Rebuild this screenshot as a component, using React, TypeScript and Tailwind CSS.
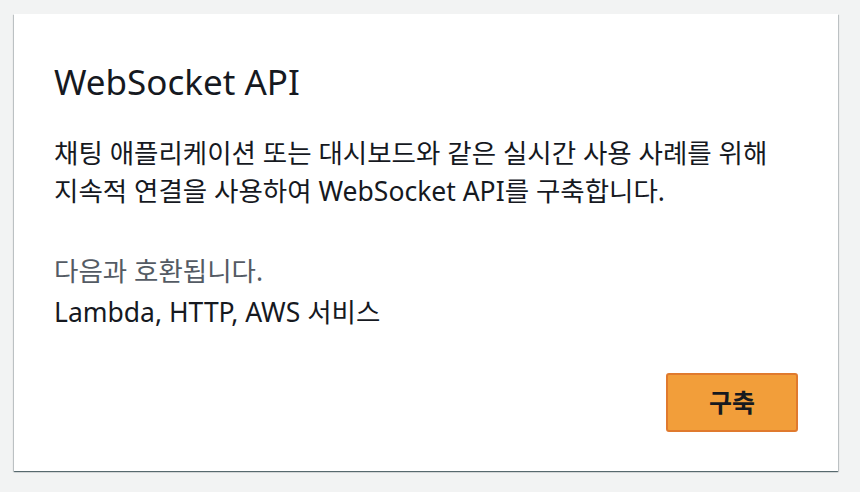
export default function App() {
  return (
    <div
      className="w-[860px] h-[492px] bg-[#f2f3f3] pt-[14px] pl-[14px]"
      style={{ fontFamily: '"Noto Sans", "Noto Sans CJK KR", sans-serif' }}
    >
      <div className="w-[824px] h-[457px] bg-white flex flex-col px-[40px] pt-[46px] pb-[39px] shadow-[0_1px_1px_0_rgba(0,28,36,0.5),1px_1px_1px_0_rgba(0,28,36,0.15),-1px_1px_1px_0_rgba(0,28,36,0.15)]">
        {/* Title */}
        <h2 className="text-[35px] leading-[44px] text-[#16191f]">WebSocket API</h2>

        {/* Description */}
        <p className="mt-[30px] text-[26.5px] leading-[38px] text-[#16191f]">
          채팅 애플리케이션 또는 대시보드와 같은 실시간 사용 사례를 위해
          <br />
          지속적 연결을 사용하여 WebSocket API를 구축합니다.
        </p>

        {/* Compatible with */}
        <div className="mt-[41px] text-[26.5px] leading-[41px]">
          <div className="text-[#545b64]">다음과 호환됩니다.</div>
          <div className="text-[#16191f]">Lambda, HTTP, AWS 서비스</div>
        </div>

        {/* Build button */}
        <div className="mt-auto flex justify-end">
          <button className="w-[132px] h-[59px] rounded-[3px] bg-[#f29e3a] border-2 border-[#e07a2e] text-[25px] font-bold text-[#16191f]">
            구축
          </button>
        </div>
      </div>
    </div>
  );
}
